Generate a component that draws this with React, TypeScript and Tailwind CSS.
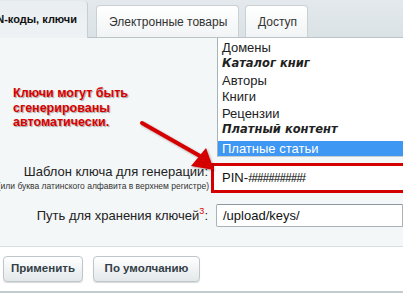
import React from "react";

const font = { fontFamily: '"Liberation Sans", Arial, sans-serif' };

export default function App() {
  const items: { t: string; b?: boolean; sel?: boolean }[] = [
    { t: "Домены" },
    { t: "Каталог книг", b: true },
    { t: "Авторы" },
    { t: "Книги" },
    { t: "Рецензии" },
    { t: "Платный контент", b: true },
    { t: "Платные статьи", sel: true },
  ];
  return (
    <div className="relative w-[403px] h-[294px] overflow-hidden bg-white text-[13px] text-[#222]" style={font}>
      {/* Tabs */}
      <div className="flex h-[38px] items-end bg-gradient-to-b from-[#e3e9ec] to-[#dbe2e6] border-b border-[#b9c3c8]">
        <div className="flex h-[37px] w-[88px] shrink-0 items-center justify-end overflow-hidden whitespace-nowrap pr-[10px] bg-gradient-to-b from-[#e9eef0] to-[#eef2f4] border-r border-[#c5ced3] rounded-tr-[4px] font-bold text-[11px] text-[#111] -mb-px pb-[1px]">
          PIN-коды, ключи
        </div>
        <div className="ml-[8px] flex h-[32px] w-[143px] shrink-0 items-center whitespace-nowrap pl-[12px] bg-gradient-to-b from-[#ffffff] to-[#f1f4f5] border border-b-0 border-[#c9d1d5] rounded-t-[4px] text-[12px] text-[#333]">
          Электронные товары
        </div>
        <div className="ml-[6px] flex h-[32px] w-[63px] shrink-0 items-center pl-[12px] bg-gradient-to-b from-[#ffffff] to-[#f1f4f5] border border-b-0 border-[#c9d1d5] rounded-t-[4px] text-[12px] text-[#333]">
          Доступ
        </div>
      </div>

      {/* Content */}
      <div className="h-[209px] bg-[#f4f7f8] border-b border-[#d7dfe3] flex flex-col">
        <div className="flex h-[119px]">
          <div className="w-[217px] pt-[48px] pl-[13px]">
            <div
              className="text-[12.5px] font-bold leading-[14.5px] text-[#d90000]"
              style={{ textShadow: "1px 1px 1px rgba(0,0,0,0.35)" }}
            >
              Ключи могут быть
              <br />
              сгенерированы
              <br />
              автоматически.
            </div>
          </div>
          <div className="flex-1 bg-white border-l border-[#a9b2b7] border-b border-b-[#c6ced2] flex flex-col pt-[1px]">
            {items.map((it) => (
              <div
                key={it.t}
                className={
                  "flex items-center pl-[4px] text-[13px] whitespace-nowrap " +
                  (it.sel ? "bg-[#3d97f3] text-white h-[15px] mt-[3px] " : "h-[16.5px] ") +
                  (it.b ? "font-bold italic pl-[2px]" : "")
                }
                style={it.b ? { fontFamily: '"DejaVu Sans", sans-serif', fontSize: "11.5px" } : undefined}
              >
                {it.t}
              </div>
            ))}
          </div>
        </div>

        <div className="flex mt-[6px] h-[30px]">
          <div className="w-[211px] flex flex-col items-end justify-center pr-[2px] overflow-visible">
            <div className="text-[13px] leading-[15px] text-[#222] mr-[1px] whitespace-nowrap">Шаблон ключа для генерации:</div>
            <div className="text-[8.5px] leading-[12px] text-[#333] whitespace-nowrap mt-[1px]">
              (или буква латинского алфавита в верхнем регистре)
            </div>
          </div>
          <div className="flex-1 border-[3px] border-[#d40000] bg-white flex items-center pl-[8px] text-[13px] text-[#111] -mr-[3px] whitespace-nowrap">
            PIN-<span className="italic tracking-[-1.6px]">##########</span>
          </div>
        </div>

        <div className="flex mt-[11px] h-[23px]">
          <div className="w-[216px] flex items-center justify-end pr-[8px] text-[13px] text-[#222] whitespace-nowrap">
            Путь для хранения ключей<sup className="text-[#d00] text-[9px] -top-[5px]">3</sup>:
          </div>
          <div className="flex-1 border border-[#a9b2b7] border-t-[#8e979c] bg-white flex items-center pl-[6px] text-[13px] text-[#111] rounded-l-[2px]">
            /upload/keys/
          </div>
        </div>
      </div>

      {/* Footer */}
      <div className="h-[46px] border-b-2 border-[#c4cbcf] flex items-start pt-[9px] gap-[10px] pl-[3px]">
        <button className="h-[26px] w-[80px] rounded-[4px] border border-[#bfc6ca] bg-gradient-to-b from-[#ffffff] to-[#e3e8ea] shadow-[0_1px_1px_rgba(0,0,0,0.15)] font-bold text-[11.5px] text-[#333f47]">
          Применить
        </button>
        <button className="h-[26px] w-[107px] rounded-[4px] border border-[#bfc6ca] bg-gradient-to-b from-[#ffffff] to-[#e3e8ea] shadow-[0_1px_1px_rgba(0,0,0,0.15)] font-bold text-[11.5px] text-[#333f47]">
          По умолчанию
        </button>
      </div>

      {/* Arrow annotation */}
      <svg className="absolute left-0 top-0 pointer-events-none" width="403" height="294">
        <defs>
          <filter id="sh" x="-20%" y="-20%" width="140%" height="140%">
            <feDropShadow dx="1" dy="1" stdDeviation="0.8" floodColor="#000" floodOpacity="0.35" />
          </filter>
        </defs>
        <g filter="url(#sh)">
          <path d="M142 123 L200 156" stroke="#d40000" strokeWidth="4" strokeLinecap="round" />
          <path d="M214 170 L191 166 L206 148 Z" fill="#d40000" />
        </g>
      </svg>
    </div>
  );
}
